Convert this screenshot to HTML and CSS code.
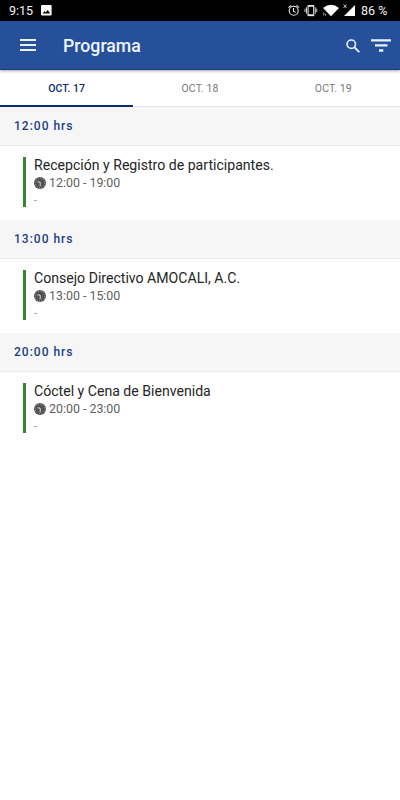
FILE: index.html
```html
<!DOCTYPE html>
<html lang="es">
<head>
<meta charset="utf-8">
<title>Programa</title>
<link rel="stylesheet" href="styles.css">
</head>
<body>
<svg width="0" height="0" class="defs">
  <symbol id="clock" viewBox="0 0 12 12">
    <circle cx="6" cy="6" r="6" fill="#505050"/>
    <circle cx="6" cy="6" r="4.7" fill="none" stroke="#bbb" stroke-width=".9" stroke-dasharray=".8 1.66"/>
    <path d="M3.4 4.8 6.2 5.2V9.3" fill="none" stroke="#eee" stroke-width=".9"/>
  </symbol>
</svg>
<div class="status">
  <span class="time">9:15</span>
  <svg class="photo" width="11" height="11" viewBox="0 0 11 11"><rect width="10.6" height="10.6" rx="1" fill="#fff"/><path d="M1.6 8.5 3.5 6l1.3 1.6 1.9-2.5L9.2 8.5z" fill="#000"/></svg>
  <svg class="icons" width="70" height="14" viewBox="286 4 70 14">
    <g fill="none" stroke="#e8e8e8" stroke-width="1.1">
      <circle cx="293.7" cy="10.8" r="4.5"/>
      <path d="M293.5 8v3.1l2.2 1.3M288.4 7.6l2.6-2.2M296.4 5.4l2.6 2.2"/>
      <rect x="308.1" y="5.6" width="5.6" height="10"/>
      <path d="M308 6.1h5.8M308 15.1h5.8" stroke-width="1.5"/>
      <path d="M306.5 7.3v6.4M315.3 7.3v6.4" stroke-width=".9"/>
      <path d="M305 8.7v3.4M316.8 8.7v3.4" stroke-width=".9"/>
    </g>
    <path d="M323 8q8-6.4 16 0l-8 8.2z" fill="#fff"/>
    <path d="M323.8 12.5v3M325.5 14v1.7" stroke="#aaa" stroke-width="1"/>
    <path d="M355 5v11h-11z" fill="#fff"/>
    <path d="m343.5 4.5 3 3.5m0-3.5-3 3.5" stroke="#ddd" stroke-width=".9"/>
  </svg>
  <span class="battery">86 %</span>
</div>
<header class="bar">
  <svg class="menu" width="16" height="12" viewBox="0 0 16 12"><path d="M0 1h16M0 6h16M0 11h16" stroke="#e9f2ff" stroke-width="1.8"/></svg>
  <h1>Programa</h1>
  <svg class="search" width="14" height="14" viewBox="0 0 14 14" fill="none" stroke="#e9f2ff"><circle cx="5.3" cy="5.2" r="4.2" stroke-width="1.6"/><path d="m8.3 8.2 5 5" stroke-width="1.9"/></svg>
  <svg class="filter" width="20" height="13" viewBox="0 0 20 13"><path d="M0 1.4h20M4 6.4h12.5M8 11.5h4.3" stroke="#e9f2ff" stroke-width="2.4"/></svg>
</header>
<nav class="tabs">
  <div class="tab active">OCT. 17</div>
  <div class="tab">OCT. 18</div>
  <div class="tab">OCT. 19</div>
</nav>
<main>
  <section>
    <h2>12:00 hrs</h2>
    <article>
      <h3>Recepción y Registro de participantes.</h3>
      <p class="when"><svg width="12" height="12"><use href="#clock"/></svg><span>12:00 - 19:00</span></p>
      <p class="place">-</p>
    </article>
  </section>
  <section>
    <h2>13:00 hrs</h2>
    <article>
      <h3>Consejo Directivo AMOCALI, A.C.</h3>
      <p class="when"><svg width="12" height="12"><use href="#clock"/></svg><span>13:00 - 15:00</span></p>
      <p class="place">-</p>
    </article>
  </section>
  <section>
    <h2>20:00 hrs</h2>
    <article>
      <h3>Cóctel y Cena de Bienvenida</h3>
      <p class="when"><svg width="12" height="12"><use href="#clock"/></svg><span>20:00 - 23:00</span></p>
      <p class="place">-</p>
    </article>
  </section>
</main>
</body>
</html>
```
FILE: styles.css
```css
* { box-sizing: border-box; margin: 0; padding: 0; }
body { width: 400px; height: 800px; background: #fff; font-family: Roboto, sans-serif; overflow: hidden; }
svg { display: block; flex: none; }
.defs { position: absolute; }
.status { display: flex; align-items: center; height: 21px; background: #000; color: #f2f2f2; font-size: 12.5px; }
.time { width: 32px; margin-left: 9px; line-height: 21px; }
.photo { margin-top: -1px; }
.icons { margin-left: 234px; }
.battery { margin-left: 5px; white-space: nowrap; line-height: 21px; }
.bar { position: relative; display: flex; align-items: center; height: 49px; background: #265099; border-bottom: 1px solid #174081; box-shadow: 0 1px 3px rgba(0, 0, 0, .35); }
.menu { margin-left: 20px; }
.bar h1 { width: 283px; margin-left: 27px; padding-top: 1px; font-size: 17.7px; font-weight: 500; line-height: 24px; color: #edf5ff; }
.search { margin-top: 1px; }
.filter { margin-left: 11px; }
.tabs { display: flex; height: 37px; border-bottom: 1px solid #e8e8e8; }
.tab { flex: 1; height: 37px; font-size: 10.5px; line-height: 37px; text-align: center; color: #777; letter-spacing: .1px; }
.tab.active { color: #0d2c70; border-bottom: 2px solid #0e2b72; font-weight: 500; letter-spacing: 0; }
h2 { height: 39px; padding-left: 14px; background: #f6f6f6; border-bottom: 1px solid #e9e9e9; color: #1d3f80; font-size: 12px; font-weight: 500; letter-spacing: 1px; line-height: 38px; }
section { height: 113px; }
article { height: 50px; margin: 11px 0 0 23px; padding-left: 8px; border-left: 3px solid #388334; }
h3 { font-size: 14.1px; font-weight: 400; line-height: 16px; color: #252525; white-space: nowrap; }
.when { display: flex; align-items: center; gap: 3px; height: 20px; font-size: 12.4px; color: #606060; }
.when span { line-height: 20px; }
.place { padding-top: 2px; font-size: 10px; line-height: 12px; color: #888; }
```
